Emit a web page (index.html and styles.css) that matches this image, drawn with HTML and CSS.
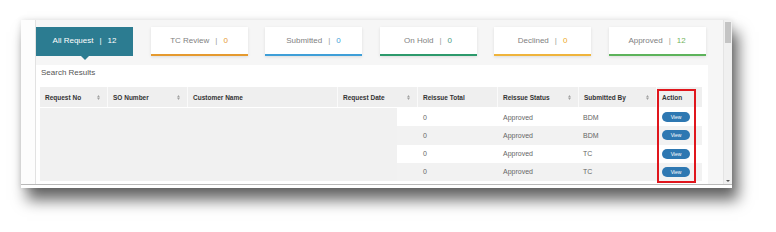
FILE: index.html
```html
<!DOCTYPE html>
<html>
<head>
<meta charset="utf-8">
<link rel="stylesheet" href="styles.css">
</head>
<body>
<div class="stage">
<div class="window">
  <div class="viewport">
    <div class="side"></div>
    <div class="main">
      <div class="tabs">
        <div class="tab active">All Request<span class="sep">|</span><span class="cnt">12</span></div>
        <div class="tab t-orange">TC Review<span class="sep">|</span><span class="cnt">0</span></div>
        <div class="tab t-blue">Submitted<span class="sep">|</span><span class="cnt">0</span></div>
        <div class="tab t-green">On Hold<span class="sep">|</span><span class="cnt">0</span></div>
        <div class="tab t-yellow">Declined<span class="sep">|</span><span class="cnt">0</span></div>
        <div class="tab t-lime">Approved<span class="sep">|</span><span class="cnt">12</span></div>
      </div>
      <div class="panel">
        <div class="title">Search Results</div>
        <div class="table">
          <div class="thead">
            <div class="th">Request No<svg class="sort" viewBox="0 0 4 7"><path d="M0 3 L2 0 L4 3Z M0 4 L2 7 L4 4Z"/></svg></div>
            <div class="th">SO Number<svg class="sort" viewBox="0 0 4 7"><path d="M0 3 L2 0 L4 3Z M0 4 L2 7 L4 4Z"/></svg></div>
            <div class="th">Customer Name</div>
            <div class="th">Request Date<svg class="sort" viewBox="0 0 4 7"><path d="M0 3 L2 0 L4 3Z M0 4 L2 7 L4 4Z"/></svg></div>
            <div class="th">Reissue Total</div>
            <div class="th">Reissue Status<svg class="sort" viewBox="0 0 4 7"><path d="M0 3 L2 0 L4 3Z M0 4 L2 7 L4 4Z"/></svg></div>
            <div class="th">Submitted By<svg class="sort" viewBox="0 0 4 7"><path d="M0 3 L2 0 L4 3Z M0 4 L2 7 L4 4Z"/></svg></div>
            <div class="th">Action</div>
          </div>
          <div class="tbody">
            <div class="blank"></div>
            <div class="rows">
              <div class="row"><span></span><span class="td">0</span><span class="td">Approved</span><span class="td by">BDM</span><span class="td"><span class="btn">View</span></span></div>
              <div class="row"><span></span><span class="td">0</span><span class="td">Approved</span><span class="td by">BDM</span><span class="td"><span class="btn">View</span></span></div>
              <div class="row"><span></span><span class="td">0</span><span class="td">Approved</span><span class="td by">TC</span><span class="td"><span class="btn">View</span></span></div>
              <div class="row"><span></span><span class="td">0</span><span class="td">Approved</span><span class="td by">TC</span><span class="td"><span class="btn">View</span></span></div>
            </div>
          </div>
          <div class="highlight"></div>
        </div>
      </div>
    </div>
    <div class="vscroll"><div class="thumb"></div><div class="arrow"></div></div>
  </div>
  <div class="hbar"></div>
</div>
</div>
</body>
</html>
```
FILE: styles.css
```css
html, body {
  margin: 0;
  padding: 0;
  background: #ffffff;
}
body {
  font-family: "Liberation Sans", Arial, sans-serif;
}
.stage {
  width: 776px;
  height: 232px;
  padding: 20px 0 0 21px;
  box-sizing: border-box;
  background: #ffffff;
}
.window {
  width: 711px;
  background: #ffffff;
  box-shadow: 6px 12px 14px 0 rgba(0, 0, 0, 0.6), 0 0 6px rgba(0, 0, 0, 0.12);
}
.viewport {
  display: flex;
  height: 164px;
  overflow: hidden;
}
.side {
  width: 14px;
  background: #fdfdfd;
  border-right: 1px solid #e2e2e2;
}
.main {
  flex: 1;
  background: #f6f6f6;
  padding-top: 7px;
  overflow: hidden;
}
.tabs {
  display: flex;
  gap: 17.5px;
  height: 29px;
}
.tab {
  position: relative;
  width: 97px;
  box-sizing: border-box;
  background: #ffffff;
  box-shadow: 0 1px 3px rgba(0, 0, 0, 0.10);
  display: flex;
  align-items: center;
  justify-content: center;
  font-size: 8px;
  color: #7f7f7f;
  border-bottom: 2px solid #ffffff;
}
.tab .sep {
  margin: 0 6px;
  color: #9a9a9a;
}
.tab.active {
  background: #2c7c91;
  color: #ffffff;
  box-shadow: none;
  border-bottom-color: #2c7c91;
}
.tab.active .sep, .tab.active .cnt { color: #ffffff; }
.tab.active::after {
  content: "";
  position: absolute;
  left: 45px;
  bottom: -6px;
  border-left: 4px solid transparent;
  border-right: 4px solid transparent;
  border-top: 4px solid #2c7c91;
}
.tab.t-orange { border-bottom-color: #e59a2f; }
.t-orange .cnt { color: #e59a2f; }
.tab.t-blue { border-bottom-color: #3f9fd8; }
.t-blue .cnt { color: #3f9fd8; }
.tab.t-green { border-bottom-color: #2d9a6c; }
.t-green .cnt { color: #4a9a84; }
.tab.t-yellow { border-bottom-color: #efb43c; }
.t-yellow .cnt { color: #eda92a; }
.tab.t-lime { border-bottom-color: #5db35b; }
.t-lime .cnt { color: #74b45e; }

.panel {
  margin-top: 9px;
  width: 672px;
  box-sizing: border-box;
  background: #ffffff;
  padding: 0 6px 0 4px;
  height: 130px;
}
.title {
  font-size: 8px;
  line-height: 10px;
  color: #555555;
  padding: 3px 0 9px 1px;
}
.table {
  position: relative;
}
.thead {
  display: grid;
  grid-template-columns: 68px 80px 150px 80px 80px 81px 78px 45px;
  height: 20px;
  background: #efefef;
}
.th {
  display: flex;
  align-items: center;
  justify-content: space-between;
  padding: 0 7px 0 5px;
  font-size: 6.5px;
  font-weight: bold;
  color: #333333;
  border-right: 1px solid #fafafa;
}
.th:last-child { border-right: none; }
.sort {
  width: 3px;
  height: 5px;
  fill: #a0a0a0;
}
.tbody {
  display: flex;
  margin-top: 1px;
  height: 73px;
}
.blank {
  width: 357px;
  background: #f1f1f1;
}
.rows {
  flex: 1;
  display: flex;
  flex-direction: column;
}
.row {
  display: grid;
  grid-template-columns: 21px 80px 81px 78px 45px;
  height: 18.25px;
  background: #ffffff;
}
.row:nth-child(even) { background: #f2f2f2; }
.td {
  display: flex;
  align-items: center;
  padding-left: 5px;
  font-size: 7px;
  color: #666666;
}
.td.by { padding-left: 4px; }
.btn {
  display: inline-flex;
  align-items: center;
  justify-content: center;
  width: 28px;
  height: 10px;
  border-radius: 5px;
  background: #2e78b2;
  color: #ffffff;
  font-size: 5px;
}
.highlight {
  position: absolute;
  left: 617px;
  top: 2px;
  width: 39px;
  height: 94px;
  box-sizing: border-box;
  border: 2px solid #e0161d;
}
.vscroll {
  width: 8px;
  background: #f0f0f0;
  border-left: 1px solid #e4e4e4;
  display: flex;
  flex-direction: column;
  justify-content: space-between;
  align-items: center;
}
.thumb {
  margin-top: 2px;
  width: 6px;
  height: 21px;
  background: #c4c4c4;
}
.arrow {
  margin-bottom: 2px;
  border-left: 2px solid transparent;
  border-right: 2px solid transparent;
  border-top: 2px solid #555555;
}
.hbar {
  height: 3px;
  border-top: 1px solid #b9b9b9;
  background: #ffffff;
}
```
